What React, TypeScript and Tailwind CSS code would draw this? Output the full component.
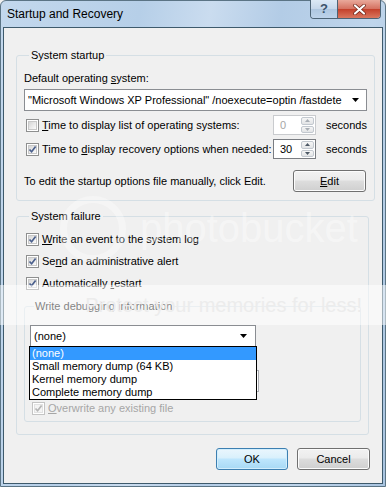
import React from 'react';

function CheckBox({ checked, disabled }: { checked?: boolean; disabled?: boolean }) {
  return (
    <div
      className={`flex h-[13px] w-[13px] shrink-0 items-center justify-center border bg-white p-[1px] ${
        disabled ? 'border-[#c4c4c4]' : 'border-[#8e8f8f]'
      }`}
    >
      <div
        className={`relative h-full w-full border ${
          disabled
            ? 'border-[#e2e2e2] bg-[#f4f4f4]'
            : 'border-[#c8c8c8] bg-[linear-gradient(135deg,#d6d6d6,#fbfbfb)]'
        }`}
      >
        {checked && (
          <svg width="9" height="9" viewBox="0 0 9 9" className="absolute left-[-1px] top-[-1px]">
            <path
              d="M1.5 4.5 L3.6 6.8 L7.6 1.6"
              fill="none"
              stroke={disabled ? '#b5b5b5' : '#4a5f8c'}
              strokeWidth="1.7"
            />
          </svg>
        )}
      </div>
    </div>
  );
}

function Arrow({ color = '#000' }: { color?: string }) {
  return (
    <svg width="8" height="5" viewBox="0 0 8 5">
      <path d="M0 0 H7 L3.5 4 Z" fill={color} />
    </svg>
  );
}

function SpinButton({ up, disabled }: { up?: boolean; disabled?: boolean }) {
  return (
    <div className="flex flex-1 items-center justify-center rounded-[2px] border border-[#c2c8cf] bg-[linear-gradient(#f6f6f6,#e2e4e6)]">
      <svg width="5" height="3" viewBox="0 0 5 3">
        <path d={up ? 'M0 3 L2.5 0 L5 3 Z' : 'M0 0 L2.5 3 L5 0 Z'} fill={disabled ? '#a8aeb5' : '#4d5966'} />
      </svg>
    </div>
  );
}

function Spin({ value, disabled }: { value: string; disabled?: boolean }) {
  return (
    <div
      className={`flex h-[20px] w-[43px] shrink-0 border bg-white ${
        disabled ? 'border-[#c9cbce]' : 'border-[#7a7d82]'
      }`}
    >
      <div className={`flex-1 pl-[6px] leading-[18px] ${disabled ? 'text-[#a6a6a6]' : 'text-black'}`}>{value}</div>
      <div className="flex w-[15px] flex-col gap-[1px] p-[1px]">
        <SpinButton up disabled={disabled} />
        <SpinButton disabled={disabled} />
      </div>
    </div>
  );
}

function Button({ children, primary, w }: { children: React.ReactNode; primary?: boolean; w: string }) {
  return (
    <div
      className={`flex h-[22px] ${w} items-center justify-center rounded-[3px] border ${
        primary
          ? 'border-[#3c7fb1] bg-[linear-gradient(#eaf6fd_0%,#d9f0fc_45%,#bee6fd_50%,#a7d9f5_100%)] shadow-[inset_0_0_0_1px_#d2eefd]'
          : 'border-[#707070] bg-[linear-gradient(#f2f2f2_0%,#ebebeb_45%,#dddddd_50%,#cfcfcf_100%)] shadow-[inset_0_0_0_1px_#fcfcfc]'
      }`}
    >
      {children}
    </div>
  );
}

function Row({ checked, disabled, children }: { checked?: boolean; disabled?: boolean; children: React.ReactNode }) {
  return (
    <div className="flex h-[16px] items-center">
      <div className="ml-[2px]">
        <CheckBox checked={checked} disabled={disabled} />
      </div>
      <span className={`ml-[3px] ${disabled ? 'text-[#a6a6a6]' : ''}`}>{children}</span>
    </div>
  );
}

export default function App() {
  return (
    <div className="relative h-[487px] w-[386px] overflow-hidden bg-[#f0f0f0] font-['Liberation_Sans',Arial,sans-serif] text-[11px] text-black">
      <div className="flex h-full w-full flex-col rounded-t-[6px] border border-[#5b7485] bg-[linear-gradient(100deg,#c3d8ed_0%,#b6cfe8_30%,#cadcef_45%,#b3cce6_60%,#bfd5eb_80%,#a9c4e0_100%)]">
        {/* title bar */}
        <div className="relative flex h-[26px] shrink-0 items-center pl-[6px]">
          <span className="text-[12px] text-black">Startup and Recovery</span>
          <div className="absolute right-[4px] top-[-1px] flex h-[19px] overflow-hidden rounded-b-[4px] border border-t-0 border-[#4d6476]">
            <div className="flex w-[27px] items-center justify-center border-r border-[#4d6476] bg-[linear-gradient(#dce9f5_0%,#c5d7ea_50%,#aec7e0_51%,#bdd3ea_100%)] text-[13px] font-bold text-[#3c536a]">
              ?
            </div>
            <div className="flex w-[42px] items-center justify-center bg-[linear-gradient(#e9a99b_0%,#d4705f_50%,#c3402b_51%,#d9775f_100%)]">
              <svg width="13" height="11" viewBox="0 0 13 11">
                <path d="M2 1.5 L11 9.5 M11 1.5 L2 9.5" stroke="#6b2316" strokeWidth="3.6" strokeLinecap="round" />
                <path d="M2 1.5 L11 9.5 M11 1.5 L2 9.5" stroke="#fff" strokeWidth="2.2" strokeLinecap="round" />
              </svg>
            </div>
          </div>
        </div>

        {/* client area */}
        <div className="mx-[2px] flex h-[457px] flex-col border border-[#3e5a6c] bg-[#f0f0f0]">
          <fieldset className="ml-[12px] mt-[19px] w-[353px] rounded-[3px] border border-[#d5dfe5] px-[7px] pb-[8px]">
            <legend className="ml-[5px] px-[2px] leading-[16px]">System startup</legend>
            <div className="mt-[7px] leading-[16px]">
              Default operating <u>s</u>ystem:
            </div>
            <div className="mt-[3px] flex h-[22px] items-center justify-between border border-[#8a8d92] bg-white pl-[3px] pr-[6px]">
              <span>"Microsoft Windows XP Professional" /noexecute=optin /fastdete</span>
              <Arrow />
            </div>
            <div className="mt-[4px] flex h-[20px] items-center">
              <div className="ml-[2px]">
                <CheckBox />
              </div>
              <span className="ml-[3px] w-[231px]">
                <u>T</u>ime to display list of operating systems:
              </span>
              <Spin value="0" disabled />
              <span className="ml-[10px]">seconds</span>
            </div>
            <div className="mt-[4px] flex h-[20px] items-center">
              <div className="ml-[2px]">
                <CheckBox checked />
              </div>
              <span className="ml-[3px] w-[231px]">
                Time to <u>d</u>isplay recovery options when needed:
              </span>
              <Spin value="30" />
              <span className="ml-[10px]">seconds</span>
            </div>
            <div className="mt-[11px] flex items-center justify-between pr-[1px]">
              <span>To edit the startup options file manually, click Edit.</span>
              <Button w="w-[73px]">
                <span>
                  <u>E</u>dit
                </span>
              </Button>
            </div>
          </fieldset>

          <fieldset className="ml-[12px] mt-[7px] w-[353px] rounded-[3px] border border-[#d5dfe5] px-[7px] pb-[12px]">
            <legend className="ml-[5px] px-[2px] leading-[16px]">System failure</legend>
            <div className="mt-[7px] flex flex-col gap-[6px]">
              <Row checked>
                <u>W</u>rite an event to the system log
              </Row>
              <Row checked>
                Se<u>n</u>d an administrative alert
              </Row>
              <Row checked>
                Automatically <u>r</u>estart
              </Row>
            </div>

            <fieldset className="mt-[7px] rounded-[3px] border border-[#d5dfe5] px-[5px] pb-[5px]">
              <legend className="ml-[4px] px-[1px] leading-[16px]">Write debugging information</legend>
              <div className="relative mt-[11px] w-[226px]">
                <div className="flex h-[22px] items-center justify-between border border-[#8a8d92] bg-white pl-[3px] pr-[7px]">
                  <span>(none)</span>
                  <Arrow />
                </div>
                <div className="absolute left-[-1px] top-[21px] z-10 w-[228px] border border-black bg-white leading-[13px]">
                  <div className="bg-[#3399ff] pl-[2px] text-white">(none)</div>
                  <div className="pl-[2px]">Small memory dump (64 KB)</div>
                  <div className="pl-[2px]">Kernel memory dump</div>
                  <div className="pl-[2px]">Complete memory dump</div>
                </div>
              </div>
              {/* dump file box, hidden under the open list */}
              <div className="mt-[23px] h-[22px] w-[229px] border border-[#abadb3] bg-white" />
              <div className="mt-[8px]">
                <Row checked disabled>
                  <u>O</u>verwrite any existing file
                </Row>
              </div>
            </fieldset>
          </fieldset>

          <div className="mr-[12px] mt-[13px] flex justify-end gap-[9px]">
            <Button primary w="w-[72px]">
              OK
            </Button>
            <Button w="w-[73px]">Cancel</Button>
          </div>
        </div>
      </div>

      {/* watermark */}
      <div className="pointer-events-none absolute left-[60px] top-[196px] h-[66px] w-[66px] rounded-full border-[7px] border-white/35" />
      <div className="pointer-events-none absolute left-[140px] top-[208px] text-[40px] leading-[40px] text-white/40">
        photobucket
      </div>
      <div className="pointer-events-none absolute left-0 top-[285px] flex h-[40px] w-full items-center justify-end whitespace-nowrap bg-white/50 pr-[24px] text-[20px] text-[#ececec]">
        Protect your memories for less!
      </div>
    </div>
  );
}
